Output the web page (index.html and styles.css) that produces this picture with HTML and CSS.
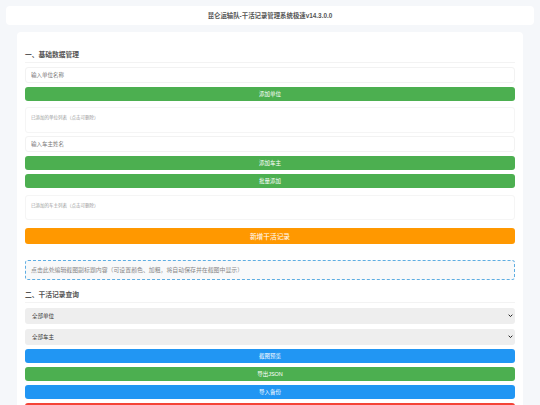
FILE: index.html
```html
<!DOCTYPE html>
<html lang="zh-CN">
<head>
  <meta charset="UTF-8">
  <meta name="viewport" content="width=device-width, initial-scale=1.0">
  <title>昆仑运输队-干活记录管理系统极速v14.3.0.0</title>
  <link rel="stylesheet" href="styles.css">
</head>
<body>
  <h1 class="page-title">昆仑运输队-干活记录管理系统极速v14.3.0.0</h1>

  <div class="container">
    <h2 class="section-title">一、基础数据管理</h2>
    <input class="text-input" type="text" placeholder="输入单位名称">
    <button class="btn btn-green">添加单位</button>
    <div class="tag-list">已添加的单位列表（点击可删除）</div>

    <input class="text-input" type="text" placeholder="输入车主姓名">
    <button class="btn btn-green">添加车主</button>
    <button class="btn btn-green">批量添加</button>
    <div class="tag-list">已添加的车主列表（点击可删除）</div>

    <button class="btn btn-orange">新增干活记录</button>

    <div class="caption-edit">点击此处编辑截图副标题内容（可设置颜色、加粗，将自动保存并在截图中显示）</div>

    <h2 class="section-title second">二、干活记录查询</h2>
    <div class="filter-wrap">
      <select class="filter"><option>全部单位</option></select>
      <svg class="filter-arrow" viewBox="0 0 8 5"><path d="M1 1l3 3 3-3" fill="none" stroke="#222" stroke-width="1.6"/></svg>
    </div>
    <div class="filter-wrap">
      <select class="filter"><option>全部车主</option></select>
      <svg class="filter-arrow" viewBox="0 0 8 5"><path d="M1 1l3 3 3-3" fill="none" stroke="#222" stroke-width="1.6"/></svg>
    </div>
    <button class="btn btn-blue">截图预览</button>
    <button class="btn btn-green">导出JSON</button>
    <button class="btn btn-blue">导入备份</button>
    <button class="btn btn-red"></button>
  </div>
</body>
</html>
```

FILE: styles.css
```css
html, body {
  height: 405px;
  overflow: hidden;
}

body {
  margin: 0;
  padding: 6px 6px 0;
  background-color: #f5f7fa;
  color: #333;
  font-family: "Liberation Sans", "Noto Sans CJK SC", sans-serif;
}

.page-title {
  height: 19px;
  margin: 0 0 7px;
  background-color: #fff;
  border-radius: 4px;
  font-size: 6.4px;
  line-height: 19px;
  font-weight: bold;
  text-align: center;
  color: #555;
}

.container {
  display: flex;
  flex-direction: column;
  margin: 0 11px;
  padding: 16px 8px 0;
  background-color: #fff;
  border-radius: 4px 4px 0 0;
}

.section-title {
  height: 14px;
  margin: 0 0 4px;
  border-bottom: 1px solid #f3f3f3;
  font-size: 6.75px;
  line-height: 13px;
  font-weight: bold;
  color: #555;
}

.section-title.second {
  margin: 8px 0 4.5px;
}

.text-input {
  box-sizing: border-box;
  flex: none;
  height: 16px;
  margin-bottom: 4px;
  padding: 0 5px;
  background-color: #fff;
  border: 1px solid #f2f2f2;
  border-radius: 3px;
  font-family: inherit;
  font-size: 5.5px;
}

.text-input::placeholder {
  color: #777;
}

.btn {
  flex: none;
  height: 14px;
  margin-bottom: 4.2px;
  padding: 0;
  border: none;
  border-radius: 3px;
  color: #fff;
  font-family: inherit;
  font-size: 5.5px;
  cursor: pointer;
}

.btn-green { background-color: #4caf50; }
.btn-blue { background-color: #2196f3; }
.btn-red { background-color: #f44336; }

.btn-orange {
  height: 16.5px;
  margin: 4px 0 15.5px;
  background-color: #ff9800;
  font-size: 6.7px;
}

.tag-list {
  box-sizing: border-box;
  flex: none;
  height: 25.5px;
  margin: 2px 0 3.5px;
  padding: 6px 5px 0;
  background-color: #fff;
  border: 1px solid #f5f5f5;
  border-radius: 3px;
  font-size: 4.5px;
  color: #999;
}

.caption-edit {
  box-sizing: border-box;
  flex: none;
  height: 20.5px;
  padding: 0 5px;
  background-color: #f8f9fa;
  border: 1px dashed #5dade2;
  border-radius: 3px;
  font-size: 5.9px;
  line-height: 18.5px;
  color: #888;
}

.filter-wrap {
  position: relative;
  flex: none;
  height: 16.5px;
  margin-bottom: 4.5px;
}

.filter-wrap + .btn {
  margin-top: -0.7px;
}

.filter {
  display: block;
  width: 100%;
  height: 100%;
  padding: 0 7px;
  background-color: #eee;
  border: none;
  border-radius: 3px;
  appearance: none;
  color: #333;
  font-family: inherit;
  font-size: 5.5px;
}

.filter-arrow {
  position: absolute;
  top: 6.5px;
  right: 2.5px;
  width: 5px;
  height: 3.2px;
}
```
